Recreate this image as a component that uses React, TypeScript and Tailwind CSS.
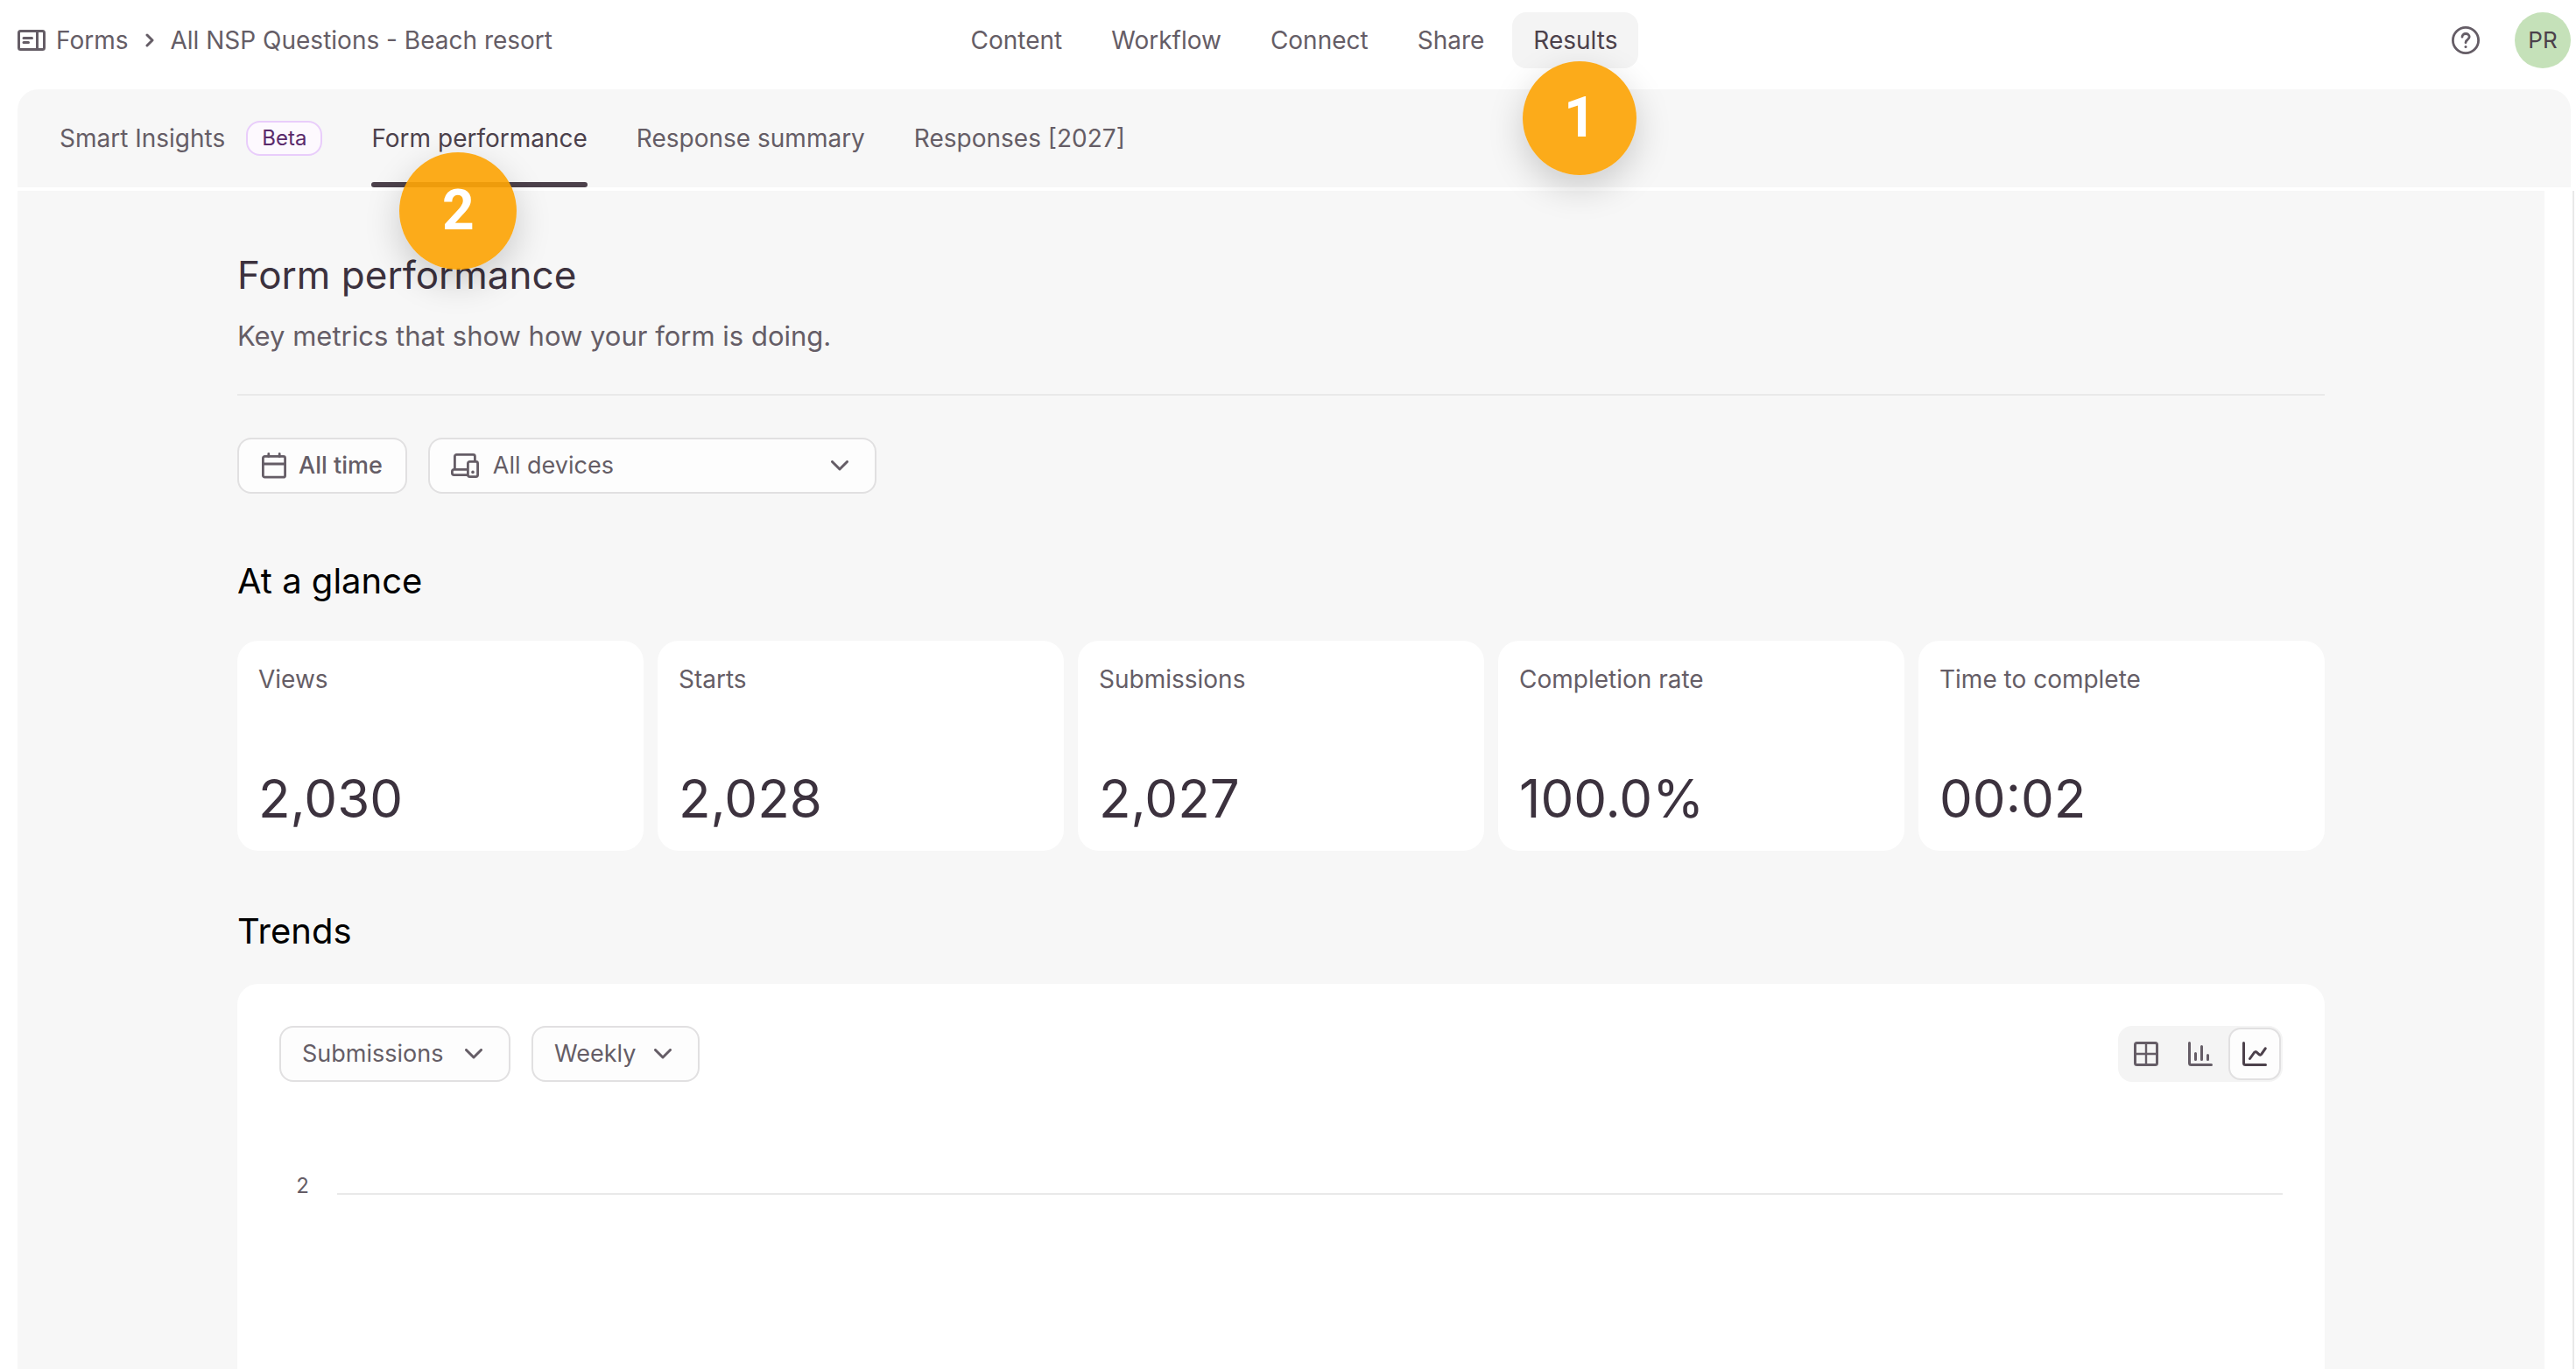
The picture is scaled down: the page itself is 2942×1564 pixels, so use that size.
import { useState } from "react";
import type { ReactNode } from "react";
import clsx from "clsx";

const NAV = ["Content", "Workflow", "Connect", "Share", "Results"];

const STATS = [
  { label: "Views", value: "2,030" },
  { label: "Starts", value: "2,028" },
  { label: "Submissions", value: "2,027" },
  { label: "Completion rate", value: "100.0%" },
  { label: "Time to complete", value: "00:02" },
];

type ChartView = "table" | "bar" | "line";

function FormsIcon() {
  return (
    <svg className="h-6 w-8 shrink-0" viewBox="0 0 32 24" fill="none" stroke="currentColor" strokeWidth="3">
      <rect x="1.5" y="1.5" width="29" height="21" rx="2" />
      <path d="M22.5 1.5v21" />
      <path d="M7 9.5h9.5M7 14.5h5.5" strokeLinecap="round" />
    </svg>
  );
}

function ChevronRight() {
  return (
    <svg className="h-4 w-2.5 shrink-0" viewBox="0 0 10 16" fill="none" stroke="currentColor" strokeWidth="3" strokeLinecap="round" strokeLinejoin="round">
      <path d="M2 2l6 6-6 6" />
    </svg>
  );
}

function ChevronDown({ className }: { className?: string }) {
  return (
    <svg className={clsx("h-3 w-5", className)} viewBox="0 0 20 12" fill="none" stroke="currentColor" strokeWidth="3" strokeLinecap="round" strokeLinejoin="round">
      <path d="M1.5 1.5L10 10l8.5-8.5" />
    </svg>
  );
}

function HelpIcon() {
  return (
    <svg className="h-8 w-8" viewBox="0 0 32 32" fill="none" stroke="currentColor" strokeWidth="2.8" strokeLinecap="round" strokeLinejoin="round">
      <circle cx="16" cy="16" r="14.6" />
      <path d="M12 12.2c0-2.3 1.8-3.7 4.1-3.7s4.1 1.5 4.1 3.6c0 1.7-1 2.5-2.2 3.4-1.3.9-2 1.7-2 3.2" />
      <circle cx="16" cy="23.6" r="1.5" fill="currentColor" stroke="none" />
    </svg>
  );
}

function CalendarIcon() {
  return (
    <svg className="h-[30px] w-7 shrink-0" viewBox="0 0 28 30" fill="none" stroke="currentColor" strokeWidth="2.8" strokeLinecap="round">
      <rect x="1.4" y="4.4" width="25.2" height="23.8" rx="2" />
      <path d="M1.4 13h25.2M7.8 1.4v3M20.2 1.4v3" />
    </svg>
  );
}

function DevicesIcon({ className }: { className?: string }) {
  return (
    <svg className={clsx("h-7 w-8", className)} viewBox="0 0 32 28" fill="none" stroke="currentColor" strokeWidth="2.8" strokeLinejoin="round">
      <path d="M4.4 18.4V3.4a2 2 0 012-2h19a2 2 0 012 2v6" />
      <path d="M19 18.4H3.4a2 2 0 00-2 2v2.2a2 2 0 002 2H19" />
      <rect x="19.4" y="9.4" width="11.2" height="17.2" rx="2" />
      <circle cx="25" cy="21.4" r="1.8" fill="currentColor" stroke="none" />
    </svg>
  );
}

function TableIcon() {
  return (
    <svg className="h-7 w-7" viewBox="0 0 28 28" fill="none" stroke="currentColor" strokeWidth="3">
      <rect x="1.5" y="1.5" width="25" height="25" rx="2" />
      <path d="M14 1.5v25M1.5 14h25" strokeWidth="2.4" />
    </svg>
  );
}

function BarIcon() {
  return (
    <svg className="h-7 w-7" viewBox="0 0 28 28" fill="none" stroke="currentColor" strokeWidth="3" strokeLinecap="round">
      <path d="M1.5 1.5v23a2 2 0 002 2h23M8.5 13.5v7M15.5 5.5v15M22.5 15.5v5" />
    </svg>
  );
}

function LineIcon() {
  return (
    <svg className="h-7 w-7" viewBox="0 0 28 28" fill="none" stroke="currentColor" strokeWidth="3" strokeLinecap="round" strokeLinejoin="round">
      <path d="M1.5 1.5v23a2 2 0 002 2h23M8.5 19.5l5-7q1.2-1.6 2.8-.3l3 2.6q1.3 1 2.4-.4l4.5-6.6" />
    </svg>
  );
}

const VIEWS: { id: ChartView; label: string; icon: ReactNode }[] = [
  { id: "table", label: "Table", icon: <TableIcon /> },
  { id: "bar", label: "Bar chart", icon: <BarIcon /> },
  { id: "line", label: "Line chart", icon: <LineIcon /> },
];

/** Numbered callout that floats over the control it points at. */
function StepBadge({ children, className }: { children: ReactNode; className: string }) {
  return (
    <span
      className={clsx(
        "pointer-events-none absolute z-10 flex items-center justify-center rounded-full bg-[#fca406]/92 font-['Roboto',sans-serif] text-[64px] font-bold text-white shadow-[0_14px_40px_rgba(0,0,0,0.18)]",
        className
      )}
    >
      {children}
    </span>
  );
}

function Tab({ active, children }: { active?: boolean; children: ReactNode }) {
  return (
    <a
      href="#"
      aria-current={active ? "page" : undefined}
      className={clsx("flex h-28 items-center gap-6", active && "text-[#4c414b]")}
    >
      {children}
    </a>
  );
}

function Select({
  label,
  options,
  icon,
  className,
}: {
  label: string;
  options: string[];
  icon?: ReactNode;
  className: string;
}) {
  return (
    <div className="relative flex items-center">
      {icon}
      <select
        aria-label={label}
        className={clsx(
          "h-16 appearance-none rounded-2xl border-2 border-[#e1e0e1] bg-[#fdfdfd] pr-14 text-[27px]",
          className
        )}
      >
        {options.map((option) => (
          <option key={option}>{option}</option>
        ))}
      </select>
      <ChevronDown className="pointer-events-none absolute right-8" />
    </div>
  );
}

export default function App() {
  const [view, setView] = useState<ChartView>("line");

  return (
    <div className="flex min-h-screen flex-col bg-white pl-5 font-['Inter',sans-serif] text-[28px] leading-8 text-[#655d66]">
      <header className="grid grid-cols-[1fr_auto_1fr] items-center pt-3.5 pr-1.5 pb-6">
        <div className="flex items-center gap-3">
          <a href="#" className="flex items-center gap-3">
            <FormsIcon />
            Forms
          </a>
          <span className="flex w-6 justify-center">
            <ChevronRight />
          </span>
          <span>All NSP Questions - Beach resort</span>
        </div>

        <nav className="flex gap-2">
          {NAV.map((item) => (
            <div key={item} className="relative">
              <a
                href="#"
                className={clsx(
                  "flex h-16 items-center rounded-2xl px-6",
                  item === "Results" && "bg-[#f4f4f4] text-[#4c414b]"
                )}
              >
                {item}
              </a>
              {item === "Results" && <StepBadge className="top-14 left-3 size-[130px]">1</StepBadge>}
            </div>
          ))}
        </nav>

        <div className="flex items-center justify-end gap-10">
          <button aria-label="Help">
            <HelpIcon />
          </button>
          <button className="flex size-16 items-center justify-center rounded-full bg-[#c5e1b9] text-[26px] text-[#4c414b]">
            PR
          </button>
        </div>
      </header>

      <div className="mr-1.5 mb-1 flex gap-14 rounded-t-3xl bg-[#f7f7f7] px-12">
        <Tab>
          Smart Insights
          <span className="flex h-10 items-center rounded-2xl border-2 border-[#e9cdfb] bg-[#fdf9fe] px-4 text-2xl text-[#5a2a6b]">
            Beta
          </span>
        </Tab>
        <div className="relative">
          <Tab active>Form performance</Tab>
          <span className="absolute inset-x-0 bottom-0 h-1.5 rounded-full bg-[#4c414b]" />
          <StepBadge className="top-18 left-8 size-[134px]">2</StepBadge>
        </div>
        <Tab>Response summary</Tab>
        <Tab>Responses [2027]</Tab>
      </div>

      <div className="flex flex-1">
        <main className="mr-8 flex flex-1 flex-col bg-[#f7f7f7] px-20 pt-16">
          <div className="mx-auto flex w-full max-w-[2384px] flex-1 flex-col">
            <div className="border-b-2 border-[#e9e9e9] pb-11">
              <h1 className="text-[44px] leading-16 text-[#3c323e]">Form performance</h1>
              <p className="mt-4 text-[31px] leading-11">Key metrics that show how your form is doing.</p>
            </div>

            <div className="mt-12 flex gap-6">
              <button className="flex h-16 items-center gap-3.5 rounded-2xl border-2 border-[#e1e0e1] bg-[#fdfdfd] px-6.5 text-[27px] font-medium">
                <CalendarIcon />
                All time
              </button>
              <Select
                label="Devices"
                options={["All devices", "Desktop", "Mobile", "Tablet"]}
                icon={<DevicesIcon className="pointer-events-none absolute left-6.5" />}
                className="w-128 pl-18"
              />
            </div>

            <h2 className="mt-19 text-[40px] leading-12 text-black">At a glance</h2>
            <dl className="mt-11 grid grid-cols-5 gap-4">
              {STATS.map((stat) => (
                <div key={stat.label} className="rounded-3xl bg-white p-6">
                  <dt className="leading-10">{stat.label}</dt>
                  <dd className="mt-20 text-[60px] leading-18 text-[#3c323e]">{stat.value}</dd>
                </div>
              ))}
            </dl>

            <h2 className="mt-17 text-[40px] leading-12 text-black">Trends</h2>
            <section className="mt-9 flex-1 rounded-t-3xl bg-white px-12 pt-12">
              <div className="flex items-center gap-6">
                <Select
                  label="Metric"
                  options={["Submissions", "Views", "Starts"]}
                  className="w-66 pl-6"
                />
                <Select
                  label="Interval"
                  options={["Weekly", "Daily", "Monthly"]}
                  className="w-48 pl-6"
                />
                <div className="ml-auto flex gap-0.5 rounded-2xl bg-[#f4f4f4] p-0.5">
                  {VIEWS.map(({ id, label, icon }) => (
                    <button
                      key={id}
                      onClick={() => setView(id)}
                      aria-label={label}
                      aria-pressed={view === id}
                      className={clsx(
                        "flex size-15 items-center justify-center rounded-[14px] border-2",
                        view === id
                          ? "border-[#e1e0e1] bg-[#fdfdfd] text-[#4c414b]"
                          : "border-transparent"
                      )}
                    >
                      {icon}
                    </button>
                  ))}
                </div>
              </div>

              <div className="mt-[103px] flex items-end gap-8">
                <span className="w-[34px] text-right text-2xl leading-8">2</span>
                <div className="mb-1.5 flex-1 border-t-2 border-[#e9e9e9]" />
              </div>
            </section>
          </div>
        </main>
        <div className="mr-0.5 w-0.5 bg-[#e9e9e9]" />
      </div>
    </div>
  );
}
